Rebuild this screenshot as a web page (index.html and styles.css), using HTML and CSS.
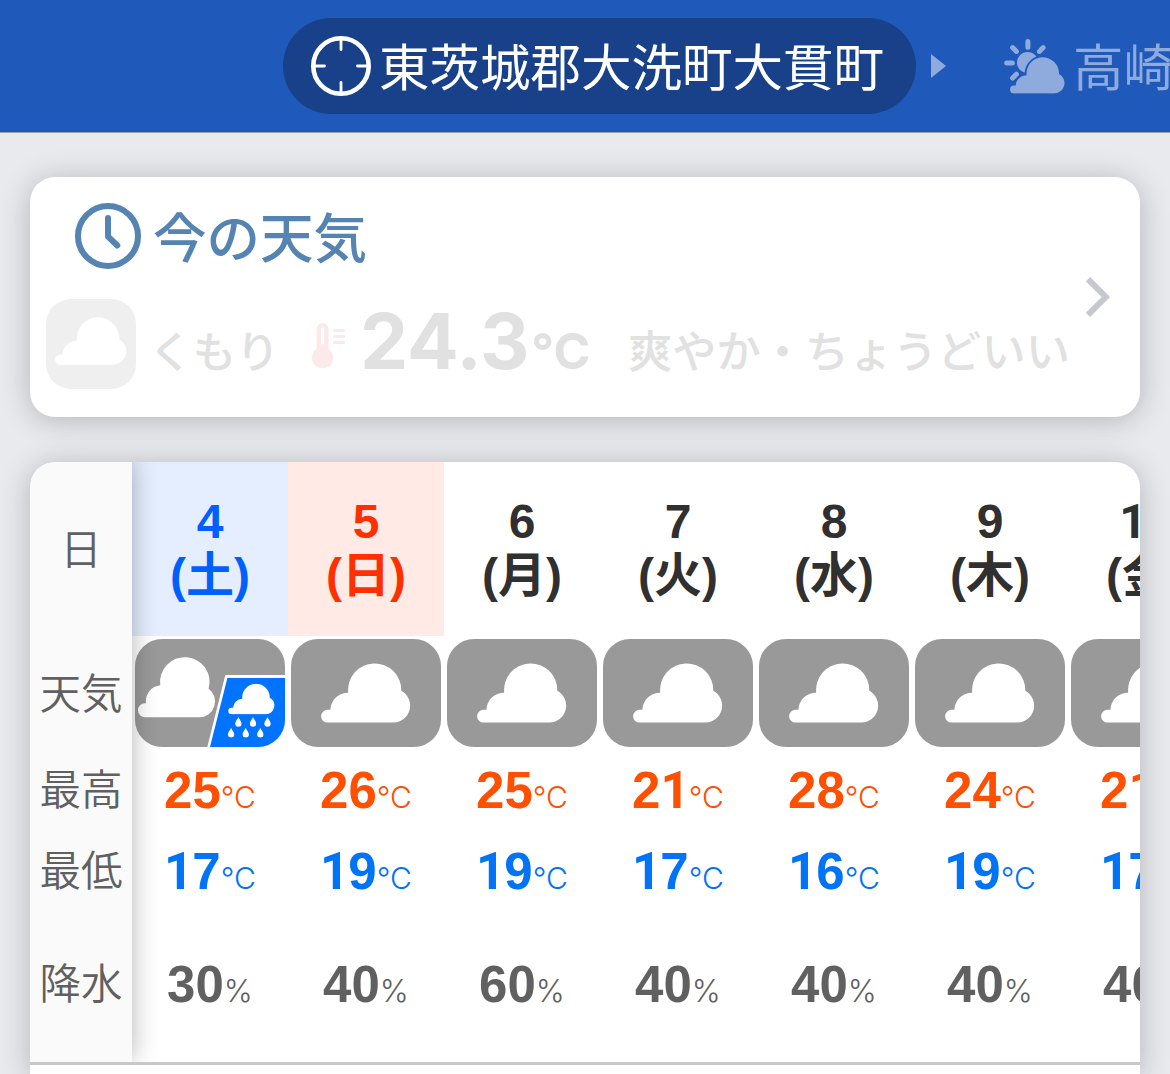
FILE: index.html
```html
<!DOCTYPE html>
<html lang="ja">
  <head>
    <meta charset="UTF-8" />
    <title>天気</title>
    <link rel="stylesheet" href="styles.css">
  </head>
  <body>
    <svg width="0" height="0" class="defs">
      <symbol id="cloud" viewBox="0 0 90 60">
        <path d="M6.5 59.6a6.4 6.4 0 0 1 0-12.8H9.3A17.7 17.7 0 0 1 27.2 29.7A26.62 26.62 0 1 1 80.3 27.7A17 17 0 0 1 72.7 59.6Z" />
      </symbol>
      <symbol id="drop" viewBox="0 0 7 10">
        <path d="M3.5 0C4.2 2.4 6.7 4.2 6.7 6.6A3.2 3.2 0 0 1 .3 6.6C.3 4.2 2.8 2.4 3.5 0Z" />
      </symbol>
    </svg>

    <header class="places">
      <div class="place current">
        <svg class="target" viewBox="0 0 60 60" width="60" height="60">
          <circle cx="30" cy="30" r="27.7" stroke-width="4.6" />
          <path d="M30 2V13.5M30 46.5V58M2 30H13.5M46.5 30H58" stroke-width="2.8" stroke-linecap="round" />
        </svg>
        <span>東茨城郡大洗町大貫町</span>
      </div>
      <svg class="arrow" viewBox="0 0 15 24" width="15" height="24"><path d="M0 0L15 12L0 24Z" /></svg>
      <div class="place next">
        <svg class="sun" viewBox="0 0 61 55" width="61" height="55">
          <circle cx="23.6" cy="23.6" r="10.6" />
          <path class="rays" d="M23.9 2.6V8.2M2.7 24H8.3M8.6 8.6L12.4 12.4M39.2 8.6L35.4 12.4M8.6 39L12.4 35.2" />
          <svg x="6" y="18" width="55" height="36.7" viewBox="0 0 90 60" overflow="visible">
            <path class="gap" d="M6.5 59.6a6.4 6.4 0 0 1 0-12.8H9.3A17.7 17.7 0 0 1 27.2 29.7A26.62 26.62 0 1 1 80.3 27.7A17 17 0 0 1 72.7 59.6Z" />
            <use href="#cloud" width="90" height="60" />
          </svg>
        </svg>
        <span>高崎市</span>
      </div>
    </header>

    <main>
      <section class="card now">
        <div class="now-body">
          <h2>
            <svg class="clock" viewBox="0 0 66 66" width="66" height="66">
              <circle cx="33" cy="33" r="30" />
              <path d="M33 15V33.5L42.3 42.5" />
            </svg>
            <span>今の天気</span>
          </h2>
          <div class="now-row">
            <div class="now-icon"><svg width="72" height="48"><use href="#cloud" /></svg></div>
            <span class="sky">くもり</span>
            <svg class="thermo" viewBox="0 0 34 46" width="34" height="46">
              <circle cx="10.6" cy="34.7" r="10.6" />
              <rect x="4.6" y="0" width="12" height="34" rx="6" />
              <rect class="slot" x="9" y="4.5" width="3.2" height="17" rx="1.5" />
              <path d="M22.5 7.6H31.8M22.5 13.6H31.8M22.5 19.5H31.8" />
            </svg>
            <span class="temp">24.3<small>°C</small></span>
            <span class="feel">爽やか・ちょうどいい</span>
          </div>
        </div>
        <svg class="chevron" viewBox="0 0 24 40" width="24" height="40"><path d="M2 2.2L19.8 20L2 37.8" /></svg>
      </section>

      <section class="card week">
        <div class="week-table">
          <div class="labels">
            <div class="r-day">日</div>
            <div class="r-icon">天気</div>
            <div class="r-temp">最高</div>
            <div class="r-temp">最低</div>
            <div class="r-rain">降水</div>
          </div>
          <div class="col">
            <div class="r-day sat"><span>4</span><span>(土)</span></div>
            <div class="r-icon">
              <svg class="tile" viewBox="0 0 150 108" width="150" height="108">
                <path class="white" d="M10 78.2a7 7 0 0 1 0-14H11A16 16 0 0 1 25.3 46.2A24.75 24.75 0 1 1 73.6 49.8A15.7 15.7 0 0 1 64.5 78.2Z" />
                <path class="white" d="M90.3 36H150V108H72.3Z" />
                <path class="rain" d="M92.4 39H150V108H75Z" />
                <use class="white" href="#cloud" x="93" y="44.5" width="47" height="31" />
                <g class="white">
                  <use href="#drop" x="99.9" y="78" width="7" height="10" />
                  <use href="#drop" x="114.5" y="78" width="7" height="10" />
                  <use href="#drop" x="129" y="78" width="7" height="10" />
                  <use href="#drop" x="92.6" y="88.7" width="7" height="10" />
                  <use href="#drop" x="107.2" y="88.7" width="7" height="10" />
                  <use href="#drop" x="121.8" y="88.7" width="7" height="10" />
                </g>
              </svg>
            </div>
            <div class="r-temp high"><b>25</b><i>°C</i></div>
            <div class="r-temp low"><b><s>1</s>7</b><i>°C</i></div>
            <div class="r-rain"><b>30</b><i>%</i></div>
          </div>
          <div class="col">
            <div class="r-day sun-day"><span>5</span><span>(日)</span></div>
            <div class="r-icon"><div class="tile"><svg width="90" height="60"><use href="#cloud" /></svg></div></div>
            <div class="r-temp high"><b>26</b><i>°C</i></div>
            <div class="r-temp low"><b><s>1</s>9</b><i>°C</i></div>
            <div class="r-rain"><b>40</b><i>%</i></div>
          </div>
          <div class="col">
            <div class="r-day"><span>6</span><span>(月)</span></div>
            <div class="r-icon"><div class="tile"><svg width="90" height="60"><use href="#cloud" /></svg></div></div>
            <div class="r-temp high"><b>25</b><i>°C</i></div>
            <div class="r-temp low"><b><s>1</s>9</b><i>°C</i></div>
            <div class="r-rain"><b>60</b><i>%</i></div>
          </div>
          <div class="col">
            <div class="r-day"><span>7</span><span>(火)</span></div>
            <div class="r-icon"><div class="tile"><svg width="90" height="60"><use href="#cloud" /></svg></div></div>
            <div class="r-temp high"><b>2<s>1</s></b><i>°C</i></div>
            <div class="r-temp low"><b><s>1</s>7</b><i>°C</i></div>
            <div class="r-rain"><b>40</b><i>%</i></div>
          </div>
          <div class="col">
            <div class="r-day"><span>8</span><span>(水)</span></div>
            <div class="r-icon"><div class="tile"><svg width="90" height="60"><use href="#cloud" /></svg></div></div>
            <div class="r-temp high"><b>28</b><i>°C</i></div>
            <div class="r-temp low"><b><s>1</s>6</b><i>°C</i></div>
            <div class="r-rain"><b>40</b><i>%</i></div>
          </div>
          <div class="col">
            <div class="r-day"><span>9</span><span>(木)</span></div>
            <div class="r-icon"><div class="tile"><svg width="90" height="60"><use href="#cloud" /></svg></div></div>
            <div class="r-temp high"><b>24</b><i>°C</i></div>
            <div class="r-temp low"><b><s>1</s>9</b><i>°C</i></div>
            <div class="r-rain"><b>40</b><i>%</i></div>
          </div>
          <div class="col">
            <div class="r-day"><span><s>1</s>0</span><span>(金)</span></div>
            <div class="r-icon"><div class="tile"><svg width="90" height="60"><use href="#cloud" /></svg></div></div>
            <div class="r-temp high"><b>2<s>1</s></b><i>°C</i></div>
            <div class="r-temp low"><b><s>1</s>7</b><i>°C</i></div>
            <div class="r-rain"><b>40</b><i>%</i></div>
          </div>
        </div>
      </section>
    </main>
  </body>
</html>
```

FILE: styles.css
```css
* {
  box-sizing: border-box;
}

body {
  margin: 0;
  width: 1170px;
  height: 1074px;
  overflow: hidden;
  background: #e9eaee;
  font-family: "Liberation Sans", "Noto Sans CJK JP", sans-serif;
}

svg {
  display: block;
  flex: none;
}

.defs {
  height: 0;
}

/* place switcher */
.places {
  display: flex;
  align-items: center;
  height: 133px;
  padding-left: 283px;
  overflow: hidden;
  background: #1f59b9;
  border-bottom: 1px solid #9c9fa6;
}

.place {
  display: flex;
  align-items: center;
  flex: none;
  font-size: 50.5px;
  line-height: 60px;
  white-space: nowrap;
}

.place span {
  padding-top: 5px;
}

.current {
  width: 633px;
  height: 96px;
  padding-left: 28px;
  gap: 8px;
  border-radius: 48px;
  background: #18418a;
  color: #fff;
}

.target {
  fill: none;
  stroke: #fff;
}

.arrow {
  margin: 0 58px 0 15px;
  fill: #8faadc;
}

.next {
  gap: 8px;
  color: #8faadc;
}

.sun {
  fill: #8faadc;
}

.rays {
  stroke: #8faadc;
  stroke-width: 5;
  stroke-linecap: round;
}

.gap {
  stroke: #1f59b9;
  stroke-width: 6;
}

/* cards */
main {
  display: flex;
  flex-direction: column;
  gap: 45px;
  padding: 44px 30px 0;
}

.card {
  flex: none;
  border-radius: 25px;
  background: #fff;
  box-shadow: 0 3px 30px rgba(0, 0, 0, 0.23);
}

.now {
  display: flex;
  align-items: center;
  height: 240px;
}

.now-body {
  width: 1056px;
  height: 240px;
  padding: 26px 0 0 16px;
}

.now h2 {
  display: flex;
  align-items: center;
  gap: 12px;
  height: 66px;
  margin: 0 0 30px 29px;
  color: #5583b2;
  font-size: 53.5px;
  font-weight: 500;
  line-height: 66px;
}

.now h2 span {
  padding-top: 7px;
}

.clock {
  fill: none;
  stroke: #5583b2;
  stroke-width: 6;
  stroke-linecap: round;
  stroke-linejoin: round;
}

.now-row {
  display: flex;
  align-items: center;
  height: 90px;
  color: #e1e1e1;
  font-weight: 500;
  white-space: nowrap;
}

.now-icon {
  display: flex;
  align-items: center;
  justify-content: center;
  width: 90px;
  height: 90px;
  padding-bottom: 6px;
  border-radius: 25px;
  background: #efefef;
  fill: #fff;
}

.sky {
  width: 163px;
  margin-left: 13px;
  padding-top: 17px;
  font-size: 43.5px;
  line-height: 60px;
}

.thermo {
  margin-top: 4px;
  fill: #fce9e9;
  stroke: none;
}

.thermo path {
  stroke: #fce9e9;
  stroke-width: 3;
  stroke-linecap: round;
}

.thermo .slot {
  fill: #fff;
}

.temp {
  width: 268px;
  margin-left: 14px;
  padding-top: 4px;
  font-family: Inter, sans-serif;
  font-size: 76.5px;
  font-weight: 700;
  line-height: 90px;
}

.temp small {
  margin-left: 2px;
  font-size: 50px;
}

.feel {
  padding-top: 17px;
  font-size: 44.2px;
  line-height: 60px;
}

.chevron {
  fill: none;
  stroke: #c7c7cf;
  stroke-width: 6;
}

/* weekly forecast */
.week {
  height: 612px;
  border-radius: 25px 25px 0 0;
  overflow: hidden;
}

.week-table {
  display: flex;
  height: 603px;
  overflow: hidden;
  border-bottom: 3px solid #c8c8c8;
}

.labels {
  position: relative;
  z-index: 1;
  flex: none;
  width: 102px;
  background: #fafafa;
  color: #606060;
  font-size: 41.5px;
  font-weight: 350;
  box-shadow: 0 -3px 24px rgba(0, 0, 0, 0.3);
}

.labels > div {
  display: flex;
  align-items: center;
  justify-content: center;
  padding: 0 0 5px;
}

.labels .r-temp {
  padding-bottom: 0;
}

.col {
  flex: none;
  width: 156px;
  color: #606060;
  text-align: center;
}

.r-day {
  height: 174px;
}

.col .r-day {
  display: flex;
  flex-direction: column;
  justify-content: center;
  color: #303030;
  font-size: 48px;
  font-weight: 700;
  line-height: 54px;
}

.col .sat {
  background: #e5eeff;
  color: #0060ff;
}

.col .sun-day {
  background: #ffeae6;
  color: #ff3000;
}

.r-icon {
  height: 114px;
}

.col .r-icon {
  padding: 3px;
}

.tile {
  display: flex;
  align-items: center;
  justify-content: center;
  width: 150px;
  height: 108px;
  border-radius: 27px;
  background: #999;
  fill: #fff;
  overflow: hidden;
}

.white {
  fill: #fff;
}

.rain {
  fill: #0073ff;
}

.r-temp {
  height: 81px;
  line-height: 81px;
}

.r-rain {
  height: 150px;
  line-height: 146px;
}

.high {
  color: #ff4f00;
}

.low {
  color: #0073f6;
}

.col b {
  font-size: 51px;
}

/* thin unit next to the bold value */
.col i {
  font-family: Inter, sans-serif;
  font-size: 30px;
  font-style: normal;
  font-weight: 300;
}

.col .r-rain i {
  font-size: 31px;
}

/* footless numeral one */
.col s {
  font-family: Roboto, sans-serif;
  letter-spacing: -0.02em;
  text-decoration: none;
}
```
